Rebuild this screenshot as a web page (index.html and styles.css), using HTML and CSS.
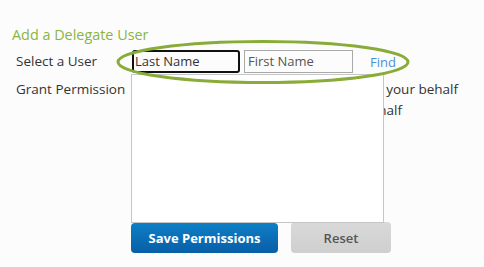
FILE: index.html
```html
<!DOCTYPE html>
<html>
<head>
<meta charset="utf-8">
<link rel="stylesheet" href="styles.css">
</head>
<body>
<div class="page">
  <h1 class="title">Add a Delegate User</h1>
  <div class="form">
    <div class="label">Select a User</div>
    <div class="search">
      <div class="box last">Last Name</div>
      <div class="box first">First Name</div>
      <a class="find">Find</a>
    </div>
    <div class="label label-perm">Grant Permission</div>
    <div class="perms">
      <div class="perm">Allow this user to act on your behalf</div>
      <div class="perm perm-short">Allow to view on behalf</div>
      <div class="listbox"></div>
    </div>
    <div></div>
    <div class="actions">
      <button class="btn save">Save Permissions</button>
      <button class="btn reset">Reset</button>
    </div>
  </div>
  <svg class="highlight" width="300" height="48" viewBox="0 0 300 48">
    <ellipse cx="147" cy="23" rx="145" ry="20.5" fill="none" stroke="#89ac38" stroke-width="3"/>
  </svg>
</div>
</body>
</html>
```
FILE: styles.css
```css
html, body {
  margin: 0;
  padding: 0;
  background: #fcfcfc;
}
body {
  font-family: "Open Sans", "Liberation Sans", sans-serif;
  font-size: 13px;
  color: #333;
}
.page {
  position: relative;
  padding: 26px 0 0 12px;
}
.title {
  margin: 0;
  font-size: 14.4px;
  line-height: 18px;
  font-weight: 400;
  color: #8ab53f;
}
.form {
  display: grid;
  grid-template-columns: 115px 1fr;
  margin: 6px 0 0 4px;
}
.label {
  font-size: 13.5px;
  line-height: 23px;
  color: #333;
}
.label-perm {
  margin-top: 7px;
  line-height: 18px;
}
.search {
  display: flex;
  align-items: center;
  height: 23px;
}
.box {
  box-sizing: border-box;
  height: 23px;
  line-height: 19px;
  white-space: nowrap;
}
.last {
  margin-left: 1px;
  width: 108px;
  border: 2px solid #111;
  border-radius: 3px;
  padding-left: 1px;
  color: #333;
}
.first {
  margin-left: 4px;
  width: 109px;
  border: 1px solid #a9a9a9;
  line-height: 21px;
  padding-left: 3px;
  color: #555;
}
.find {
  margin-left: 17px;
  color: #4a90d6;
}
.perms {
  position: relative;
  margin-top: 7px;
  height: 142px;
  width: 327px;
}
.perm {
  font-size: 13.5px;
  line-height: 21px;
  margin-top: -1px;
  text-align: right;
  white-space: nowrap;
}
.perm-short {
  margin-top: 0;
  padding-right: 56px;
}
.listbox {
  position: absolute;
  left: 0;
  top: -6px;
  width: 253px;
  height: 149px;
  box-sizing: border-box;
  background: #fff;
  border: 1px solid #c6c6c6;
}
.actions {
  display: flex;
  align-items: flex-end;
  gap: 13px;
}
.btn {
  font-family: "Open Sans", "Liberation Sans", sans-serif;
  font-size: 13px;
  border: none;
  border-radius: 4px;
  padding: 0;
}
.save {
  width: 147px;
  height: 30px;
  background: linear-gradient(#0e7fc6, #085ea6);
  color: #fff;
  font-weight: 700;
}
.reset {
  width: 100px;
  height: 31px;
  background: linear-gradient(#d9d9d9, #cfcfcf);
  color: #555;
  font-weight: 600;
}
.highlight {
  position: absolute;
  left: 116px;
  top: 39px;
}
```
